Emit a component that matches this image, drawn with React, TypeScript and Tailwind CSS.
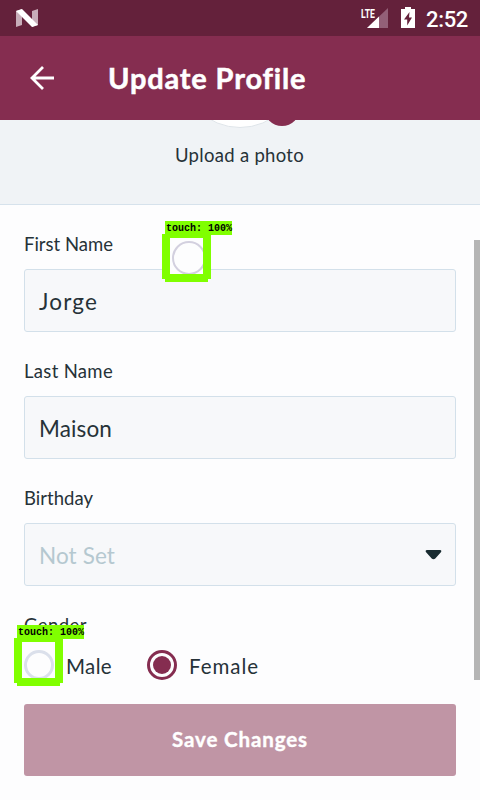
import React from "react";

function TouchMarker({ className, children }: { className: string; children?: React.ReactNode }) {
  return (
    <div className={`absolute h-[62px] w-[70px] ${className}`}>
      <div className="absolute left-0 top-[13px] h-[45px] w-[49px] bg-[#80ff00]" />
      <div className="absolute left-[3px] top-[53px] h-[8px] w-[43px] bg-[#80ff00]" />
      <div className="absolute left-[8px] top-[17px] h-[36px] w-[33px] overflow-hidden bg-[#fdfdfe]">{children}</div>
      <div className="absolute left-[3px] top-0 h-[14px] w-[67px] whitespace-pre bg-[#80ff00] pl-px pt-px font-['Liberation_Mono',monospace] text-[10px] font-bold leading-[13px] text-black">
        <Text w={66}>touch: 100%</Text>
      </div>
    </div>
  );
}

function Text({ w, children, className = "" }: { w: number; children: string; className?: string }) {
  const ref = React.useRef<HTMLSpanElement>(null);
  const [spacing, setSpacing] = React.useState(0);
  React.useLayoutEffect(() => {
    const el = ref.current;
    if (el) setSpacing((w - el.getBoundingClientRect().width) / children.length);
  }, []);
  return (
    <span ref={ref} className={`inline-block whitespace-nowrap ${className}`} style={{ letterSpacing: spacing }}>
      {children}
    </span>
  );
}

function Field({ label, labelWidth, value, valueWidth, select = false }: { label: string; labelWidth: number; value: string; valueWidth: number; select?: boolean }) {
  return (
    <div className="flex h-[127px] flex-col">
      <div className="h-[37px] text-[18.5px] leading-6">
        <Text w={labelWidth}>{label}</Text>
      </div>
      <div className="flex h-[63px] items-center justify-between rounded-[3px] border border-[#d3e0ea] bg-[#f7f8fa] pl-[14px] pr-[13px] text-[22.5px]">
        <Text w={valueWidth} className={select ? "mt-[2px] text-[#b5c8d0]" : "mt-[2px]"}>{value}</Text>
        {select && (
          <svg width="17" height="10" viewBox="0 0 17 10" fill="#182b30">
            <path d="M2 0h13c1.5 0 1.7 1.4.9 2.3L10.3 8.6c-1 .9-2.6.9-3.6 0L1.1 2.3C.3 1.4.5 0 2 0Z" />
          </svg>
        )}
      </div>
    </div>
  );
}

export default function App() {
  return (
    <div className="relative flex h-[800px] w-[480px] flex-col overflow-hidden bg-[#fdfdfe] font-['Lato',sans-serif] text-[#263238]">
      <div className="flex h-9 shrink-0 items-center bg-[#64213b] pl-4 pr-3 text-white">
        <svg width="22" height="18" viewBox="0 0 22 18">
          <path d="M0 2 6 0v16l-6 2ZM16 2l6-2v16l-6 2Z" fill="#c7adb9" />
          <path d="M0 2 6 0l16 16-6 2Z" fill="#fff" />
        </svg>
        <svg className="ml-auto" width="27" height="22" viewBox="0 0 27 22">
          <path d="M27 1v20H6Z" fill="#936078" />
          <path d="M18 9.6V21H6Z" fill="#fff" />
          <path d="M0 0h14v8l-3 4H0Z" fill="#64213b" />
          <text x="0" y="10.5" fontSize="13" fontWeight="bold" fontFamily="Roboto, sans-serif" fill="#fff" textLength="14" lengthAdjust="spacingAndGlyphs">LTE</text>
        </svg>
        <svg className="-mt-px ml-[13px]" width="14" height="21" viewBox="0 0 14 21">
          <path d="M4 0h6v2h4v19H0V2h4Z" fill="#fff" />
          <path d="M8.5 5 3 12.5h3.2v6L11 10.5H8Z" fill="#64213b" />
        </svg>
        <div className="ml-[11px] mt-[2px] font-['Roboto',sans-serif] text-[22px] font-medium"><Text w={42}>2:52</Text></div>
      </div>
      <header className="flex h-[84px] shrink-0 items-center bg-[#852d50] text-white">
        <svg className="ml-[30px]" width="24" height="24" viewBox="0 0 24 24" fill="none" stroke="currentColor" strokeWidth="2.8">
          <path d="M24 12H2M13 1 2 12l11 11" />
        </svg>
        <h1 className="ml-[54px] text-[29px] font-bold [-webkit-text-stroke:0.5px_#fff]"><Text w={198}>Update Profile</Text></h1>
      </header>
      <section className="relative h-[85px] shrink-0 overflow-hidden border-b border-[#d6e2ec] bg-[#f0f3f6]">
        <div className="absolute -top-[112px] left-[180px] size-[120px] rounded-full border border-[#dfe5ea] bg-white" />
        <div className="absolute -top-[30px] left-[264px] size-9 rounded-full bg-[#852d50]" />
        <div className="pl-[175px] pt-[23px] text-[18.5px] leading-6"><Text w={129}>Upload a photo</Text></div>
      </section>
      <main className="flex flex-col px-6 pt-[27px]">
        <Field label="First Name" labelWidth={89} value="Jorge" valueWidth={59} />
        <Field label="Last Name" labelWidth={89} value="Maison" valueWidth={73} />
        <Field label="Birthday" labelWidth={69} value="Not Set" valueWidth={76} select />
        <div className="h-6 text-[18.5px] leading-6"><Text w={63}>Gender</Text></div>
        <div className="mt-[9px] flex h-10 items-center text-[20.5px]">
          <span className="ml-[42px]"><Text w={46}>Male</Text></span>
          <span className="-mt-[2px] ml-[35px] flex size-[30px] items-center justify-center rounded-full border-[3px] border-[#852d50]">
            <span className="size-[18px] rounded-full bg-[#852d50]" />
          </span>
          <span className="ml-[12px]"><Text w={70}>Female</Text></span>
        </div>
        <button className="mt-[18px] h-[72px] rounded-[3px] bg-[#c095a5] pb-px text-[20.5px] font-bold text-white [-webkit-text-stroke:0.4px_#fff]"><Text w={136}>Save Changes</Text></button>
      </main>
      <div className="absolute left-[474px] top-[240px] h-[440px] w-[6px] bg-[#b5b5b5]" />
      <TouchMarker className="left-[162px] top-[221px]">
        <div className="ml-[2px] mt-[3px] size-[34px] rounded-full border-2 border-[#d3d0df]" />
      </TouchMarker>
      <TouchMarker className="left-[14px] top-[625px]">
        <div className="ml-[2px] mt-[8px] size-[30px] rounded-full border-[3px] border-[#dbe0eb]" />
      </TouchMarker>
    </div>
  );
}
